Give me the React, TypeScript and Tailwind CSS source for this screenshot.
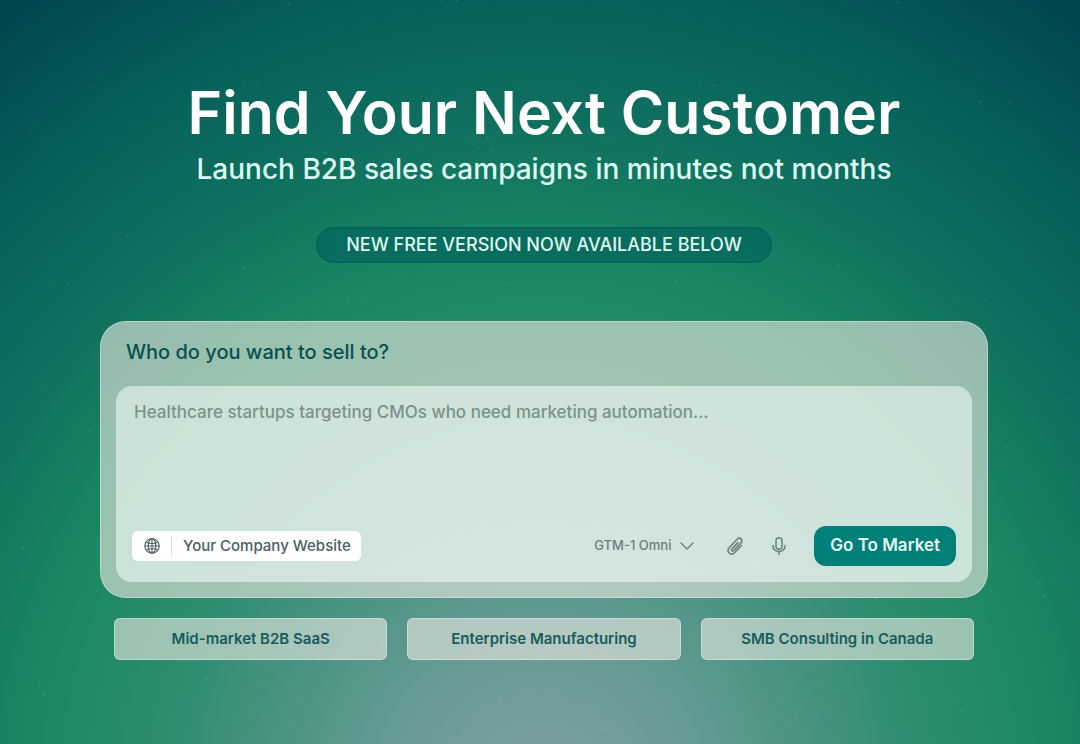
/**
 * Landing hero with the campaign prompt box
 */

import React, { useState } from 'react';

const SEGMENTS = ['Mid-market B2B SaaS', 'Enterprise Manufacturing', 'SMB Consulting in Canada'];

interface IconProps {
  className?: string;
}

const GlobeIcon: React.FC<IconProps> = ({ className = '' }) => (
  <svg viewBox="0 0 20 20" fill="none" stroke="currentColor" strokeWidth="1.4" className={className} aria-hidden="true">
    <circle cx="10" cy="10" r="9" />
    <ellipse cx="10" cy="10" rx="4.8" ry="9" />
    <path d="M10 1v18M1 10h18M3 5.200c3.800 1.800 10.200 1.800 14 0M3 14.800c3.800-1.800 10.200-1.800 14 0" />
  </svg>
);

const ChevronIcon: React.FC<IconProps> = ({ className = '' }) => (
  <svg viewBox="0 0 14 8" fill="none" stroke="currentColor" strokeWidth="1.3" strokeLinecap="round" className={className} aria-hidden="true">
    <path d="M1 1l6 6 6-6" />
  </svg>
);

const PaperclipIcon: React.FC<IconProps> = ({ className = '' }) => (
  <svg viewBox="0 0 18 18" fill="none" stroke="currentColor" strokeWidth="1.6" strokeLinecap="round" className={className} aria-hidden="true">
    <path d="M11.9 5.6l-6 6.3c-.6.7-.5 1.4 0 1.8s1.200.4 1.800-.2l7.300-7.600c1.200-1.300 1.200-2.900.1-3.900s-2.700-.9-3.900.3L3.500 10.300c-1.900 2-1.900 4.300-.4 5.700s3.800 1.300 5.600-.5l6.700-7" />
  </svg>
);

const MicIcon: React.FC<IconProps> = ({ className = '' }) => (
  <svg viewBox="0 0 14 18" fill="none" stroke="currentColor" strokeWidth="1.5" strokeLinecap="round" className={className} aria-hidden="true">
    <rect x="4" y="0.8" width="6" height="11.400" rx="3" />
    <path d="M1 8.500v.7a6 5.300 0 0 0 12 0v-.7M7 14.500v2.800" />
  </svg>
);

// faint dust scattered over the gradient
const stars = Array.from({ length: 170 }, (_, i) => ({
  x: (i * 137.508 + (i % 7) * 61) % 1080,
  y: (i * 89.31 + (i % 5) * 43) % 744,
  opacity: 0.08 + (i % 4) * 0.05
}));

const StarField: React.FC = () => (
  <svg
    viewBox="0 0 1080 744"
    preserveAspectRatio="xMidYMid slice"
    className="absolute inset-0 h-full w-full pointer-events-none"
    aria-hidden="true"
  >
    {stars.map((star, i) => (
      <circle key={i} cx={star.x} cy={star.y} r="0.9" fill="#a7e3cf" opacity={star.opacity} />
    ))}
  </svg>
);

const PromptCard: React.FC<{ prompt: string; onChange: (value: string) => void }> = ({ prompt, onChange }) => {
  const [website, setWebsite] = useState('');

  return (
    <form
      onSubmit={(e) => e.preventDefault()}
      className="rounded-[26px] border border-white/35 bg-[#e6e6df]/62 px-[15px] pt-4 pb-[15px]"
    >
      <label htmlFor="prompt" className="block px-2.5 text-xl leading-7 font-medium text-[#09504f]">
        Who do you want to sell to?
      </label>

      <div className="mt-5 rounded-2xl bg-[#f2faf6]/58 p-4">
        <textarea
          id="prompt"
          value={prompt}
          onChange={(e) => onChange(e.target.value)}
          placeholder="Healthcare startups targeting CMOs who need marketing automation..."
          className="block h-[124px] w-full resize-none bg-transparent px-0.5 text-[17px] leading-5 font-medium text-[#2b4f4b] outline-none placeholder:text-[#7b928b]"
        />

        <div className="flex flex-wrap items-center justify-between gap-3">
          <label className="flex h-[30px] items-center rounded-md bg-white pl-3 text-[#4b6060]">
            <GlobeIcon className="h-4 w-4" />
            <span className="mx-[11px] h-5 w-px bg-[#dce3e2]" />
            <input
              type="text"
              value={website}
              onChange={(e) => setWebsite(e.target.value)}
              aria-label="Your Company Website"
              placeholder="Your Company Website"
              className="w-[178px] bg-transparent text-[15px] font-medium outline-none placeholder:text-[#4b6060]"
            />
          </label>

          <div className="flex items-center text-[#6a7f7b]">
            <label className="flex items-center gap-2">
              <select aria-label="Model" className="appearance-none bg-transparent text-[13px] font-medium outline-none">
                <option>GTM-1 Omni</option>
              </select>
              <ChevronIcon className="h-2 w-3.5" />
            </label>
            <button type="button" aria-label="Attach file" className="ml-8">
              <PaperclipIcon className="h-[18px] w-[18px]" />
            </button>
            <button type="button" aria-label="Dictate" className="ml-7">
              <MicIcon className="h-[18px] w-3.5" />
            </button>
            <button
              type="submit"
              className="ml-7 h-10 rounded-xl bg-[#008079] px-4 text-[17px] font-semibold text-[#e6f7f4]"
            >
              Go To Market
            </button>
          </div>
        </div>
      </div>
    </form>
  );
};

export default function App() {
  const [prompt, setPrompt] = useState('');

  return (
    <main className="relative min-h-screen bg-[radial-gradient(ellipse_950px_1000px_at_50%_108%,#7a9c9f_0%,#729d9c_10%,#5c988f_21%,#2f8d70_39%,#1c8863_53%,#10705f_68%,#07625b_80%,#00484f_96%)] pt-[79px] pr-4 pb-20 pl-6 font-['Inter',sans-serif]">
      <StarField />
      <div className="relative mx-auto max-w-[888px]">
        <header className="flex flex-col items-center text-center">
          <h1 className="text-[59px] leading-[68px] font-semibold text-white">Find Your Next Customer</h1>
          <p className="mt-1 text-[28px] leading-9 font-medium text-[#dcfbf3]">Launch B2B sales campaigns in minutes not months</p>
          <p className="mt-10 rounded-full border-2 border-[#005a54]/40 bg-[#05685e]/80 px-7 py-1 text-lg leading-6 font-medium text-[#dff7f0]">
            NEW FREE VERSION NOW AVAILABLE BELOW
          </p>
        </header>

        <section className="mt-[58px]">
          <PromptCard prompt={prompt} onChange={setPrompt} />

          <div className="mt-5 grid grid-cols-1 gap-5 px-3.5 sm:grid-cols-3">
            {SEGMENTS.map((segment) => (
              <button
                key={segment}
                type="button"
                onClick={() => setPrompt(segment)}
                className="h-[42px] rounded-md border border-white/35 bg-[#e6e6df]/62 text-[15px] font-semibold text-[#165c5d]"
              >
                {segment}
              </button>
            ))}
          </div>
        </section>
      </div>
    </main>
  );
}
